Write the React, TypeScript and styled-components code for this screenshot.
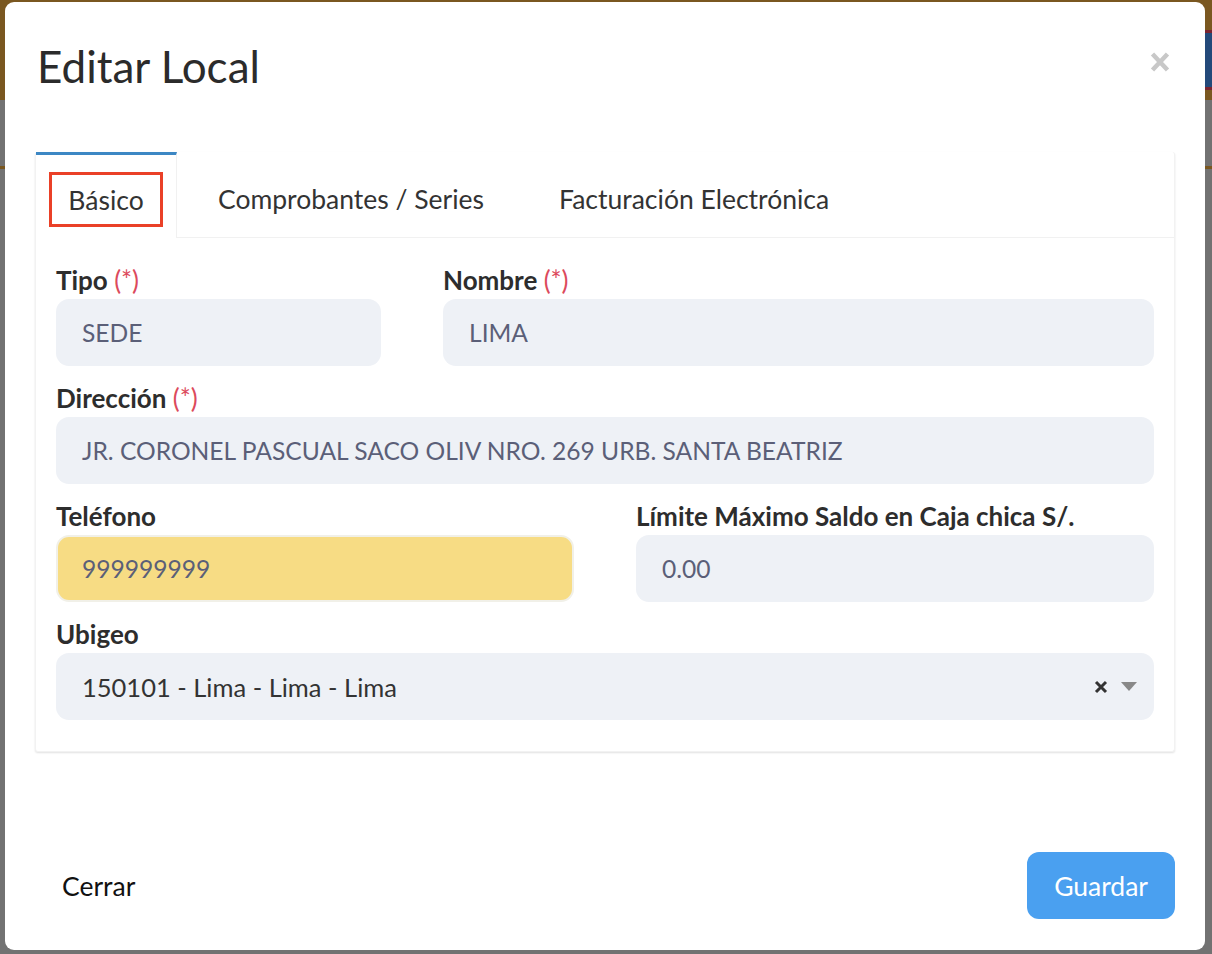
import React from "react";
import styled, { createGlobalStyle } from "styled-components";

const Global = createGlobalStyle`
  html, body { margin: 0; padding: 0; }
  body {
    width: 1212px;
    height: 954px;
    overflow: hidden;
    font-family: Lato, "Noto Sans", sans-serif;
    background: #707070;
  }
  * { box-sizing: border-box; }
`;

const Backdrop = styled.div`
  position: relative;
  width: 1212px;
  height: 954px;
  background: #727272;
`;

const PageHeader = styled.div`
  height: 100px;
  background: #7a5720;
  display: flex;
  justify-content: flex-end;
`;

const PageBadge = styled.div`
  width: 40px;
  height: 60px;
  margin-top: 30px;
  background: #23497a;
  border-top: 3px solid #7a2430;
  border-bottom: 3px solid #7a2430;
`;

const PageStrip = styled.div`
  height: 3px;
  margin-top: 66px;
  background: #7a5720;
`;

const Overlay = styled.div`
  position: absolute;
  inset: 0;
  padding: 2px 7px 4px 5px;
`;

const Modal = styled.div`
  height: 948px;
  background: #fff;
  border-radius: 9px;
  display: flex;
  flex-direction: column;
  padding: 0 30px;
`;

const Header = styled.div`
  display: flex;
  justify-content: space-between;
  align-items: flex-start;
  padding: 35px 3px 0 2px;
  height: 150px;
`;

const Title = styled.h1`
  margin: 0;
  font-family: Lato, "Noto Sans", sans-serif;
  font-weight: 400;
  font-size: 44px;
  line-height: 58px;
  color: #2b2b2b;
  letter-spacing: 0;
`;

const Close = styled.button`
  border: 0;
  background: transparent;
  padding: 0;
  margin-top: 13px;
  width: 24px;
  height: 24px;
  display: flex;
  align-items: center;
  justify-content: center;
  cursor: pointer;
`;

const Card = styled.div`
  background: #fff;
  border: 1px solid #f2f2f2;
  border-top: 0;
  border-radius: 3px;
  box-shadow: 0 1px 2px rgba(0, 0, 0, 0.12);
`;

const TabBar = styled.div`
  display: flex;
  height: 86px;
  border-bottom: 1px solid #f1f1f1;
`;

const Tab = styled.div<{ $active?: boolean }>`
  display: flex;
  align-items: center;
  padding: ${(p) => (p.$active ? "6px 13px 0 13px" : "6px 33px 0 41px")};
  border-top: 3px solid ${(p) => (p.$active ? "#3c87c4" : "transparent")};
  border-right: 1px solid ${(p) => (p.$active ? "#f1f1f1" : "transparent")};
  background: ${(p) => (p.$active ? "#fff" : "transparent")};
  margin-bottom: ${(p) => (p.$active ? "-1px" : "0")};
  font-size: 26.5px;
  color: #333;
  white-space: nowrap;
`;

const Highlight = styled.span`
  display: inline-flex;
  align-items: center;
  justify-content: center;
  border: 3px solid #ea4027;
  width: 114px;
  height: 55px;
`;

const Body = styled.div`
  padding: 27px 20px 31px 20px;
  display: flex;
  flex-direction: column;
  gap: 17px;
`;

const Row = styled.div<{ $cols: string }>`
  display: grid;
  grid-template-columns: ${(p) => p.$cols};
  column-gap: 62px;
`;

const Field = styled.div`
  display: flex;
  flex-direction: column;
  gap: 4px;
`;

const Label = styled.label`
  font-weight: 700;
  font-size: 26px;
  line-height: 30px;
  color: #2d2d2d;
  white-space: nowrap;
`;

const Req = styled.span`
  color: #dc4a5c;
  font-weight: 400;
`;

const Input = styled.div<{ $filled?: boolean }>`
  height: 67px;
  border-radius: 13px;
  background: ${(p) => (p.$filled ? "#f7dc84" : "#eef1f6")};
  border: ${(p) => (p.$filled ? "2px solid #f1f0e8" : "0")};
  display: flex;
  align-items: center;
  padding-left: ${(p) => (p.$filled ? "24px" : "26px")};
  font-size: 24.6px;
  color: #5b5f78;
`;

const Select = styled.div`
  height: 67px;
  border-radius: 13px;
  background: #eef1f6;
  display: flex;
  align-items: center;
  padding: 0 17px 0 26px;
  font-size: 25.5px;
  color: #333;
`;

const SelectText = styled.span`
  flex: 1;
`;

const SelectIcons = styled.span`
  display: flex;
  align-items: center;
  gap: 13px;
`;

const Footer = styled.div`
  margin-top: auto;
  padding-bottom: 31px;
  display: flex;
  justify-content: space-between;
  align-items: center;
`;

const Button = styled.button<{ $primary?: boolean }>`
  height: 67px;
  padding: 0 27px;
  border: 0;
  border-radius: 12px;
  background: ${(p) => (p.$primary ? "#4aa0f0" : "transparent")};
  color: ${(p) => (p.$primary ? "#fff" : "#111")};
  font-family: Lato, "Noto Sans", sans-serif;
  font-size: 26.5px;
  cursor: pointer;
`;

export default function App() {
  return (
    <>
      <Global />
      <Backdrop>
        <PageHeader>
          <PageBadge />
        </PageHeader>
        <PageStrip />
        <Overlay>
          <Modal>
            <Header>
              <Title>Editar Local</Title>
              <Close aria-label="close">
                <svg width="20" height="22" viewBox="0 0 20 22">
                  <path d="M2.5 3 L17.5 19 M17.5 3 L2.5 19" stroke="#c8c8c8" strokeWidth="4.5" strokeLinecap="butt" />
                </svg>
              </Close>
            </Header>
            <Card>
              <TabBar>
                <Tab $active>
                  <Highlight>Básico</Highlight>
                </Tab>
                <Tab>Comprobantes / Series</Tab>
                <Tab>Facturación Electrónica</Tab>
              </TabBar>
              <Body>
                <Row $cols="325px 1fr">
                  <Field>
                    <Label>
                      Tipo <Req>(*)</Req>
                    </Label>
                    <Input>SEDE</Input>
                  </Field>
                  <Field>
                    <Label>
                      Nombre <Req>(*)</Req>
                    </Label>
                    <Input>LIMA</Input>
                  </Field>
                </Row>
                <Row $cols="1fr">
                  <Field>
                    <Label>
                      Dirección <Req>(*)</Req>
                    </Label>
                    <Input>JR. CORONEL PASCUAL SACO OLIV NRO. 269 URB. SANTA BEATRIZ</Input>
                  </Field>
                </Row>
                <Row $cols="1fr 1fr">
                  <Field>
                    <Label>Teléfono</Label>
                    <Input $filled>999999999</Input>
                  </Field>
                  <Field>
                    <Label>Límite Máximo Saldo en Caja chica S/.</Label>
                    <Input>0.00</Input>
                  </Field>
                </Row>
                <Row $cols="1fr">
                  <Field>
                    <Label>Ubigeo</Label>
                    <Select>
                      <SelectText>150101 - Lima - Lima - Lima</SelectText>
                      <SelectIcons>
                        <svg width="14" height="14" viewBox="0 0 14 14">
                          <path d="M2 2 L12 12 M12 2 L2 12" stroke="#333" strokeWidth="3" />
                        </svg>
                        <svg width="16" height="10" viewBox="0 0 16 10">
                          <path d="M0 0 H16 L8 9 Z" fill="#888" />
                        </svg>
                      </SelectIcons>
                    </Select>
                  </Field>
                </Row>
              </Body>
            </Card>
            <Footer>
              <Button>Cerrar</Button>
              <Button $primary>Guardar</Button>
            </Footer>
          </Modal>
        </Overlay>
      </Backdrop>
    </>
  );
}
